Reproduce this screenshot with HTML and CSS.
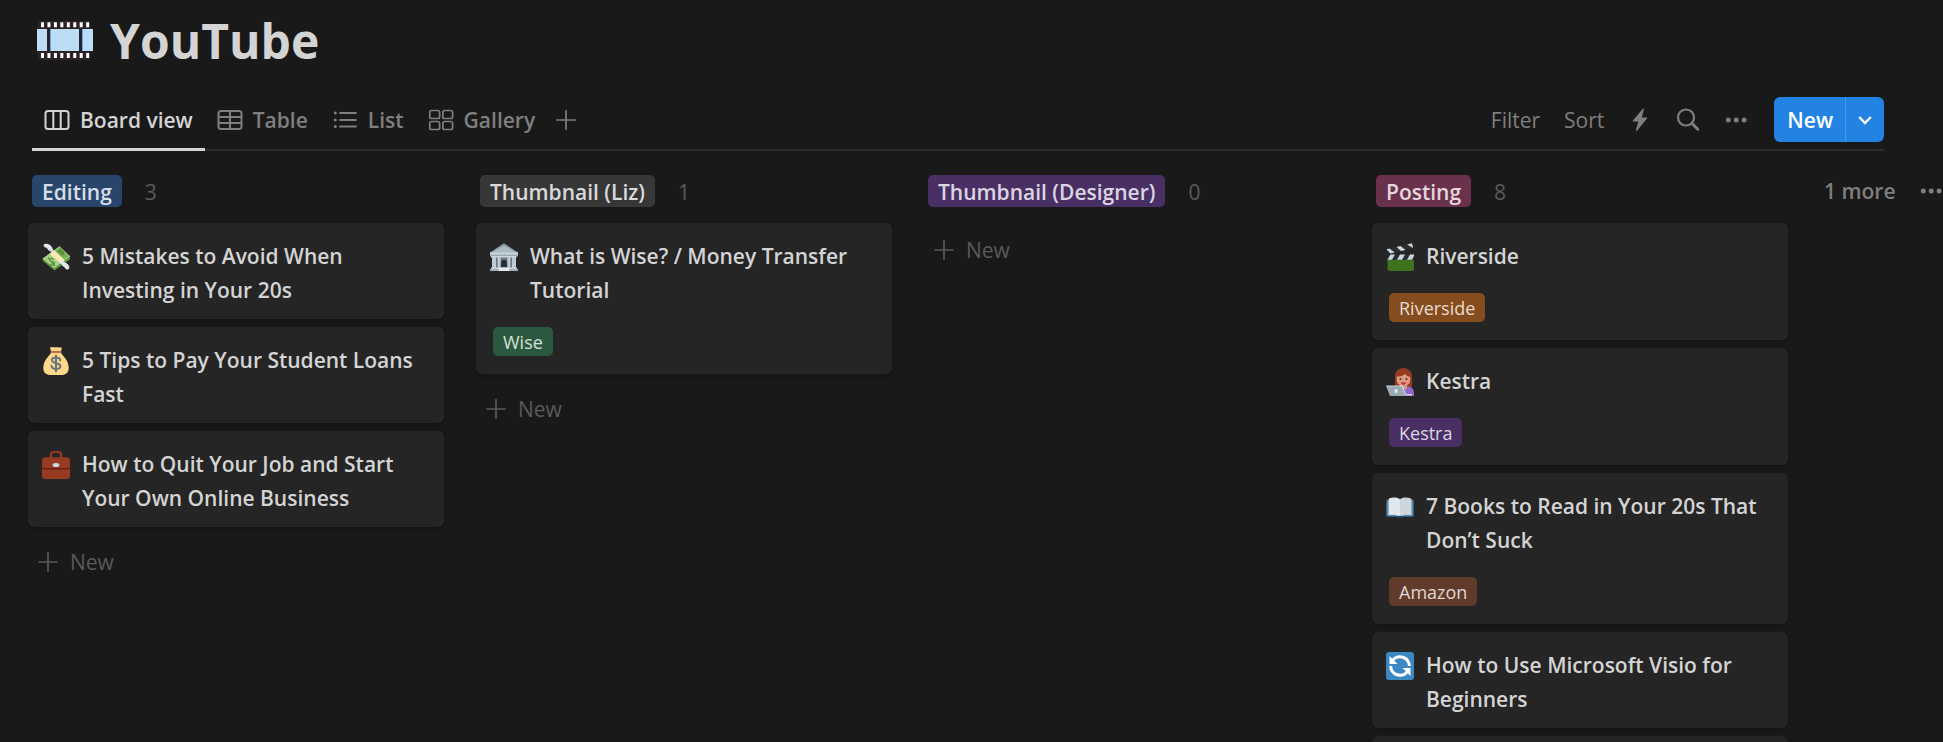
FILE: index.html
```html
<!DOCTYPE html>
<html lang="en">
<head>
<meta charset="utf-8">
<title>YouTube</title>
<meta name="viewport" content="width=device-width, initial-scale=1">
<link rel="stylesheet" href="styles.css">
</head>
<body>
<svg class="sprite" width="0" height="0" aria-hidden="true">
  <symbol id="plus" viewBox="0 0 20 20"><path d="M10 .8v18.400M.8 10h18.400" fill="none" stroke="currentColor" stroke-width="1.700" stroke-linecap="round"/></symbol>
  <symbol id="dots" viewBox="0 0 24 24"><g fill="currentColor"><circle cx="4.300" cy="12" r="2.500"/><circle cx="12.200" cy="12" r="2.500"/><circle cx="20.100" cy="12" r="2.500"/></g></symbol>
</svg>

<header class="page-head">
  <svg class="page-icon" viewBox="0 0 56 40" aria-hidden="true">
    <path fill="#2a2226" d="M1 0h54v39H1z"/>
    <path d="M5.500 3.800h51" stroke="#fff" stroke-width="5" stroke-dasharray="3 3.450" transform="translate(-1.500)"/>
    <path d="M5.500 34.500h51" stroke="#fff" stroke-width="5" stroke-dasharray="3 3.450" transform="translate(-1.500)"/>
    <path fill="#bbddf5" d="M0 8h10v22H0zM14 8h28v22H14zM46 8h10v22H46z"/>
    <path fill="#5dadec" d="M13 8h1v22h-1zM45 8h1v22h-1z"/>
    <path fill="#191919" d="M53 0h2v7h-2zM53 31h2v8h-2z"/>
  </svg>
  <h1 class="page-title">YouTube</h1>
</header>

<div class="toolbar">
  <nav class="tabs" aria-label="Views">
    <button class="tab tab-active" type="button">
      <svg class="tab-icon" viewBox="0 0 26 22" aria-hidden="true"><g fill="none" stroke="currentColor" stroke-width="2"><rect x="1.500" y="2" width="23" height="18" rx="2.500"/><path d="M9.300 2v18M16.700 2v18"/></g></svg>
      Board view
    </button>
    <button class="tab" type="button">
      <svg class="tab-icon" viewBox="0 0 26 22" aria-hidden="true"><g fill="none" stroke="currentColor" stroke-width="2"><rect x="1.500" y="2" width="23" height="18" rx="2.500"/><path d="M1.500 8h23M1.500 14h23M13 2v18"/></g></svg>
      Table
    </button>
    <button class="tab" type="button">
      <svg class="tab-icon" viewBox="0 0 26 22" aria-hidden="true"><path d="M8 4h16M8 11h16M8 17.500h16" stroke="currentColor" stroke-width="1.800" stroke-linecap="round"/><g fill="currentColor"><circle cx="3.300" cy="4" r="1.500"/><circle cx="3.300" cy="11" r="1.500"/><circle cx="3.300" cy="17.500" r="1.500"/></g></svg>
      List
    </button>
    <button class="tab" type="button">
      <svg class="tab-icon" viewBox="0 0 26 22" aria-hidden="true"><g fill="none" stroke="currentColor" stroke-width="1.700"><rect x="1.800" y="1.500" width="9.800" height="8" rx="1.800"/><rect x="14.800" y="1.500" width="9.800" height="8" rx="1.800"/><rect x="1.800" y="12.500" width="9.800" height="8" rx="1.800"/><rect x="14.800" y="12.500" width="9.800" height="8" rx="1.800"/></g></svg>
      Gallery
    </button>
    <button class="tab tab-add" type="button" aria-label="Add view"><svg class="plus" aria-hidden="true"><use href="#plus"/></svg></button>
  </nav>
  <div class="actions">
    <button class="action" type="button">Filter</button>
    <button class="action" type="button">Sort</button>
    <button class="action" type="button" aria-label="Automations">
      <svg class="action-icon" viewBox="0 0 24 24" aria-hidden="true"><path fill="currentColor" d="M14.800.8 4.900 12.500c-.4.500-.2 1 .4 1h5L8 21.800c-.2.900.6 1.300 1.200.600l9.700-11.700c.4-.500.2-1.100-.5-1.100h-4.600l2-7.800c.3-1-.4-1.500-1-1z"/></svg>
    </button>
    <button class="action" type="button" aria-label="Search">
      <svg class="action-icon" viewBox="0 0 24 24" aria-hidden="true"><g fill="none" stroke="currentColor"><circle cx="10" cy="9.500" r="8" stroke-width="2.200"/><path d="m16 15.500 5.800 5.800" stroke-width="3" stroke-linecap="round"/></g></svg>
    </button>
    <button class="action" type="button" aria-label="More options"><svg class="action-icon" aria-hidden="true"><use href="#dots"/></svg></button>
    <div class="new-split">
      <button class="new-main" type="button">New</button>
      <button class="new-drop" type="button" aria-label="New options"><svg class="chevron" viewBox="0 0 16 16" aria-hidden="true"><path d="m2.200 5 5.800 6 5.800-6" fill="none" stroke="#fff" stroke-width="2.400"/></svg></button>
    </div>
  </div>
</div>

<main class="board">
  <section class="column">
    <header class="column-head"><h2 class="status blue">Editing</h2><span class="count">3</span></header>
    <a class="card" href="#">
      <div class="card-title">
        <svg class="emoji" viewBox="0 0 28 28" aria-hidden="true">
          <path fill="#5c913b" d="m.5 15.500.3 2.500 11.800 9.500 15.400-11-.2-3z"/><path fill="#a7d28b" d="M.5 15.500 17.500 3.300l10.700 10-16.100 12z"/><path fill="#77b255" d="m13 8 4.600-3.700 9.300 8.800-4.500 3.400z"/>
          <path fill="#5c913b" d="m15 8 3.500-2.800 3 2.900c2.200 1 1.300 4-1.200 4.300z"/>
          <path fill="#ffe8b6" d="m7.700 10.700 4.500-3.300 10.500 9.900-4.200 3.300z"/>
          <path d="M11.500 16.500c-2.500-2.200-5-.4-3.200 1.400 1.500 1.300 3.200.5 4 2 1 2.300-2 3.200-4 1.200M6 14.500l7 8.500" fill="none" stroke="#5c913b" stroke-width="1.200"/>
          <path fill="#e1e8ed" d="M12.200 8.900C10.800 5.700 9.500 1.500 5 .7 2 .3 1 1.700 2 3.500c.8 1.300 2.500 1 3 1.700.7 1.100 2 2.800 4.200 3.500zM16.500 17.200c2.900.3 5 .8 6.800 2.300 2.700 1.500 4.700 3.400 3.800 6.100-.8 1.500-3 1.200-4-.7-.8-1.300-2.500-1.500-3.200-3-1-1.700-2.400-2.900-3.400-4.700z"/>
        </svg>
        <span>5 Mistakes to Avoid When Investing in Your 20s</span>
      </div>
    </a>
    <a class="card" href="#">
      <div class="card-title">
        <svg class="emoji" viewBox="0 0 28 28" aria-hidden="true">
          <path fill="#fdd888" d="M18.500 5c1 3 7.800 7 8.200 15.300C27 25 24 28 19 28H9c-5 0-8-3-7.700-7.700C1.800 12 8.500 8 9.500 5L8 1c0-1 1-1 2-.5 1-.8 2-.5 2.700.1 1-.7 2-.7 2.700 0 1-.8 2-.3 2.600 0 1.500-.4 2 0 1.800.8z"/>
          <path fill="#bf6952" d="M9 4h10c1 0 1 2 0 2H9C8 6 8 4 9 4z"/>
          <path d="M14 8.500v16M18.200 13.500c-.2-4.300-8.200-3.900-8.200-.4 0 4.200 8.500 2.300 8.500 6.200 0 3.700-8.800 3.800-9-.5" fill="none" stroke="#67757f" stroke-width="2" stroke-linecap="round"/>
        </svg>
        <span>5 Tips to Pay Your Student Loans Fast</span>
      </div>
    </a>
    <a class="card" href="#">
      <div class="card-title">
        <svg class="emoji" viewBox="0 0 28 28" aria-hidden="true">
          <path d="M9 7V3.500C9 2 10 1 11.500 1h5C18 1 19 2 19 3.500V7" fill="none" stroke="#963b22" stroke-width="2.200"/>
          <rect y="6.300" width="28" height="21.700" rx="3" fill="#963b22"/><path fill="#662113" d="M0 17h28v1.500H0z"/><ellipse cx="14" cy="14" rx="3.400" ry="2" fill="#ccd6dd"/>
        </svg>
        <span>How to Quit Your Job and Start Your Own Online Business</span>
      </div>
    </a>
    <button class="add" type="button"><svg class="plus" aria-hidden="true"><use href="#plus"/></svg>New</button>
  </section>

  <section class="column">
    <header class="column-head"><h2 class="status gray">Thumbnail (Liz)</h2><span class="count">1</span></header>
    <a class="card" href="#">
      <div class="card-title">
        <svg class="emoji" viewBox="0 0 28 28" aria-hidden="true">
          <path fill="#66757f" d="M3 12h22v13H3z"/><path fill="#292f33" d="M11 25v-5a3 3 0 0 1 6 0v5z"/>
          <path fill="#8899a6" d="M14 .3 28 9.500v4H0v-4z"/><path fill="#aab8c2" d="M14 2.400 25.500 9h-23z"/>
          <path fill="#bdcbd5" d="M0 9h28v3.300H0zM2 14h4v11H2zM7.600 14h3v11h-3zM17.400 14h3v11h-3zM22 14h4v11h-4z"/>
          <path fill="#ccd6dd" d="M1 13h25.500v1.500H1zM1 24.500h26v1.700H1z"/><path fill="#9cabb6" d="M0 26h28v2H0z"/><path fill="#e1e8ed" d="M9.500 24.500h9l1.500 3.500H8z"/>
        </svg>
        <span>What is Wise? / Money Transfer Tutorial</span>
      </div>
      <span class="tag green">Wise</span>
    </a>
    <button class="add" type="button"><svg class="plus" aria-hidden="true"><use href="#plus"/></svg>New</button>
  </section>

  <section class="column">
    <header class="column-head"><h2 class="status purple">Thumbnail (Designer)</h2><span class="count">0</span></header>
    <button class="add" type="button"><svg class="plus" aria-hidden="true"><use href="#plus"/></svg>New</button>
  </section>

  <section class="column">
    <header class="column-head"><h2 class="status pink">Posting</h2><span class="count">8</span></header>
    <a class="card" href="#">
      <div class="card-title">
        <svg class="emoji" viewBox="0 0 28 28" aria-hidden="true">
          <path fill="#3e721d" d="M1.500 16.500h27V25a3 3 0 0 1-3 3h-21a3 3 0 0 1-3-3z"/>
          <path fill="#292f33" d="M1.500 11.500h27v5.200h-27zM.5 6.300 26 .3l1.200 4.800-24.800 6z"/>
          <path fill="#ccd6dd" d="m1.500 16.700 3-5.200H9l-3 5.200zM11 16.700l3-5.200h5l-3 5.200zM21 16.700l3-5.200h4.500v.6l-2.600 4.600zM.5 6.300l3-.7 5.200 4-4.300 1zM10.500 4l4-1 5 4-4.500 1zM21 1.500l5-1.200.8 3.300.3 1.400z"/>
        </svg>
        <span>Riverside</span>
      </div>
      <span class="tag orange">Riverside</span>
    </a>
    <a class="card" href="#">
      <div class="card-title">
        <svg class="emoji" viewBox="0 0 28 28" aria-hidden="true">
          <path fill="#963b22" d="M9 19V8c0-10.500 17-10.500 17 0v11z"/>
          <path fill="#9268ca" d="M14 28v-8c2-1.500 5-2 8-1.600 4 .3 6 2.800 6 6.600v3z"/>
          <path fill="#d79e84" d="M14 16h7v4c-1 2-6 2-7 0z"/>
          <path fill="#d79e84" d="M10.800 8.500C14 8.500 17 8 19 6c1 1.500 3.500 2.700 5.200 3v3c0 8-13.400 8-13.400 0z"/>
          <circle cx="14.500" cy="11" r="1" fill="#662113"/><circle cx="20.500" cy="11" r="1" fill="#662113"/><path fill="#df1f32" d="M15 14.500h5c0 3-5 3-5 0z"/>
          <path fill="#ccd6dd" d="M0 17.500h16.500L20.300 26H26v1.500H4z"/><path fill="#99aab5" d="M.7 18.500h14.800l4.700 9.500H4.200z"/><ellipse cx="10" cy="23" rx="1.700" ry="2.100" fill="#e1e8ed"/>
        </svg>
        <span>Kestra</span>
      </div>
      <span class="tag purple">Kestra</span>
    </a>
    <a class="card" href="#">
      <div class="card-title">
        <svg class="emoji" viewBox="0 0 28 28" aria-hidden="true">
          <path fill="#226699" d="M2 7h24c1.200 0 2 .8 2 2v13c0 1.200-.8 2-2 2H16.500c-.3 1.500-4.700 1.500-5 0H2c-1.200 0-2-.8-2-2V9c0-1.200.8-2 2-2z"/>
          <path fill="#99aab5" d="M1.500 6.500h25v16h-25z"/>
          <path fill="#e1e8ed" d="M3 5.500c4-1.500 8.500-1.500 11 .7v17.300c-3-2-7-2-11-1.500z"/><path fill="#ccd6dd" d="M25 5.500c-4-1.500-8.500-1.500-11 .7v17.300c3-2 7-2 11-1.500z"/>
          <circle cx="14" cy="24" r="1.300" fill="#292f33"/>
        </svg>
        <span>7 Books to Read in Your 20s That Don’t Suck</span>
      </div>
      <span class="tag brown">Amazon</span>
    </a>
    <a class="card" href="#">
      <div class="card-title">
        <svg class="emoji" viewBox="0 0 28 28" aria-hidden="true">
          <rect width="28" height="28" rx="3" fill="#3b88c3"/>
          <g fill="none" stroke="#fff" stroke-width="3"><path d="M6.500 8.600A9.300 9.300 0 0 1 23.300 14"/><path d="M21.500 19.400A9.300 9.300 0 0 1 4.700 14"/></g>
          <path fill="#fff" d="M3.500 4v8h8zM24.500 24v-8h-8z"/>
        </svg>
        <span>How to Use Microsoft Visio for Beginners</span>
      </div>
    </a>
    <a class="card" href="#" aria-label="Untitled"></a>
  </section>

  <div class="more">
    <button class="more-button" type="button">1 more</button>
    <button class="more-button" type="button" aria-label="Group options"><svg class="action-icon" aria-hidden="true"><use href="#dots"/></svg></button>
  </div>
</main>
</body>
</html>
```
FILE: styles.css
```css
* {
  box-sizing: border-box;
}

body {
  margin: 0;
  height: 100vh;
  overflow: hidden;
  background: #191919;
  color: #d4d4d4;
  font-family: "Open Sans", "Noto Sans", sans-serif;
  font-size: 21px;
}

button {
  margin: 0;
  padding: 0;
  border: 0;
  background: none;
  color: inherit;
  font: inherit;
  cursor: pointer;
}

svg {
  display: block;
  flex: none;
}

.sprite {
  position: absolute;
}

.page-head {
  display: flex;
  align-items: center;
  gap: 17px;
  padding: 9px 37px 0;
}

.page-icon {
  width: 56px;
  height: 40px;
}

.page-title {
  margin: 0;
  font-size: 48px;
  font-weight: 700;
  line-height: 64px;
}

.toolbar {
  display: flex;
  justify-content: space-between;
  align-items: flex-end;
  height: 59px;
  margin: 19px 59px 0 32px;
  border-bottom: 2px solid #2d2d2d;
}

.tabs {
  display: flex;
  height: 59px;
  margin-bottom: -2px;
}

.tab {
  display: flex;
  align-items: center;
  gap: 10px;
  padding: 0 12px;
  color: #7f7f7f;
  font-weight: 600;
  border-bottom: 3px solid transparent;
}

.tab-active {
  color: #d4d4d4;
  border-bottom-color: #d4d4d4;
}

.tab-add {
  padding-left: 9px;
}

.tab-icon {
  width: 26px;
  height: 22px;
}

.plus {
  width: 20px;
  height: 20px;
}

.actions {
  display: flex;
  align-items: center;
  gap: 24px;
  padding-bottom: 7px;
  color: #7f7f7f;
}

.action-icon {
  width: 24px;
  height: 24px;
}

.new-split {
  display: flex;
  height: 45px;
  margin-left: 2px;
  border-radius: 6px;
  background: #2383e2;
  color: #fff;
}

.new-main {
  padding: 0 12px 0 13px;
  font-weight: 600;
  border-right: 1px solid #4a97e2;
}

.new-drop {
  padding: 0 11px;
}

.chevron {
  width: 16px;
  height: 16px;
}

.board {
  display: flex;
  align-items: flex-start;
  gap: 32px;
  padding: 24px 0 0 28px;
}

.column {
  display: flex;
  flex: 0 0 416px;
  flex-direction: column;
  gap: 8px;
}

.column-head {
  display: flex;
  align-items: center;
  gap: 23px;
  padding: 0 4px;
  margin-bottom: 8px;
  line-height: 30px;
}

.status {
  margin: 0;
  padding: 2px 10px 0;
  border-radius: 5px;
  font-size: 21px;
  font-weight: 600;
}

.count {
  padding-top: 2px;
  color: #5a5a5a;
}

.card {
  display: block;
  min-height: 96px;
  padding: 16px 14px 12px;
  border-radius: 6px;
  background: #252525;
  box-shadow: 0 2px 4px rgba(0, 0, 0, 0.2);
  color: inherit;
  text-decoration: none;
}

.card-title {
  display: flex;
  gap: 12px;
  font-weight: 600;
  line-height: 34px;
}

.emoji {
  width: 28px;
  height: 28px;
  margin-top: 4px;
}

.tag {
  display: block;
  width: fit-content;
  margin: 20px 3px 6px;
  padding: 1px 10px 0;
  border-radius: 5px;
  font-size: 18px;
  line-height: 28px;
}

.blue { background: #28456c; color: #d6dde6; }
.gray { background: #373737; color: #d9d9d9; }
.purple { background: #492f64; color: #dbd5e1; }
.pink { background: #69314c; color: #e4d6dc; }
.green { background: #2b593f; color: #d5e0d9; }
.orange { background: #854c1d; color: #eadbd0; }
.brown { background: #603b2c; color: #e0d6d2; }

.add {
  display: flex;
  align-items: center;
  gap: 12px;
  height: 54px;
  padding: 0 10px;
  color: #5a5a5a;
}

.more {
  display: flex;
  flex: none;
  align-items: center;
  gap: 24px;
  height: 32px;
  padding-left: 4px;
  color: #7f7f7f;
}

.more-button {
  font-weight: 600;
}
```
